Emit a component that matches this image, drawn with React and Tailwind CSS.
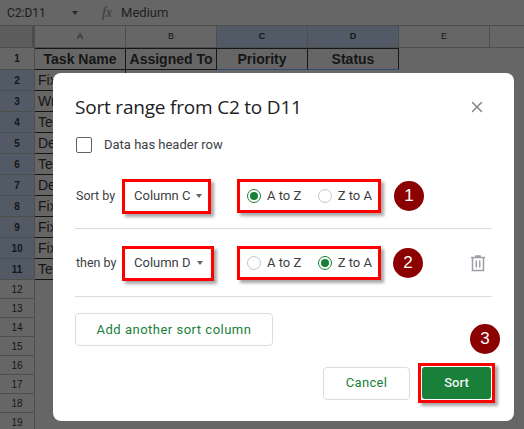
import React from 'react';
import { X } from 'lucide-react';

const columns = [
  { label: 'A', head: 'Task Name', selected: false },
  { label: 'B', head: 'Assigned To', selected: false },
  { label: 'C', head: 'Priority', selected: true },
  { label: 'D', head: 'Status', selected: true },
  { label: 'E', head: '', selected: false },
];

const rows = ['Fix', 'Wr', 'Tes', 'De', 'Tes', 'De', 'Fix', 'Fix', 'Fix', 'Tes'];
const emptyRows = [12, 13, 14, 15, 16, 17, 18, 19];

function Sheet() {
  return (
    <div className="w-[524px] h-[429px] overflow-hidden bg-[#666666] font-['Liberation_Sans',sans-serif] text-[#161616]">
      <div className="h-[26px] flex items-center border-b border-[#4e4e4e] text-[12px] font-['Roboto',sans-serif] text-[#1c1c1c]">
        <span className="ml-[7px] w-[65px]">C2:D11</span>
        <span className="w-0 h-0 border-x-[3.5px] border-x-transparent border-t-[4px] border-t-[#2a2a2a]"></span>
        <span className="ml-[24px] italic font-['Liberation_Serif',serif] text-[14px] text-[#3c3c3c]">fx</span>
        <span className="ml-[9px] text-[13px] text-[#222222]">Medium</span>
      </div>
      <div className="flex h-[22px] border-b border-[#4e4e4e]">
        <div className="w-[35px] bg-[#5d5d5d] border-r-[3px] border-[#4c4c4c]"></div>
        {columns.map((c) => (
          <div
            key={c.label}
            className={`w-[91px] shrink-0 flex items-center justify-center text-[9px] border-r border-[#4e4e4e] ${c.selected ? 'bg-[#525a66] font-bold' : ''}`}
          >
            {c.label}
          </div>
        ))}
      </div>
      <div className="flex h-[22px]">
        <div className="w-[35px] flex items-center justify-center text-[10px] font-bold border-r border-[#4e4e4e] border-b">1</div>
        {columns.slice(0, 4).map((c) => (
          <div
            key={c.label}
            className={`w-[91px] shrink-0 flex items-center justify-center text-[14px] font-bold whitespace-nowrap border-r border-t border-b border-t-[#161616] border-r-[#161616] ${c.selected ? 'border-b-[#2f4a73]' : 'border-b-[#161616]'}`}
          >
            {c.head}
          </div>
        ))}
      </div>
      {rows.map((name, i) => (
        <div key={i} className="flex h-[21px]">
          <div className="w-[35px] bg-[#525a66] flex items-center justify-center text-[10px] font-bold border-r border-b border-[#4e4e4e]">{i + 2}</div>
          <div className="w-[91px] pl-[3px] flex items-center text-[14px] border-r border-b border-[#161616]">{name}</div>
        </div>
      ))}
      {emptyRows.map((n) => (
        <div key={n} className="flex h-[19px]">
          <div className="w-[35px] flex items-center justify-center text-[10px] border-r border-b border-[#4e4e4e]">{n}</div>
        </div>
      ))}
    </div>
  );
}

function Radio({ checked, label }) {
  return (
    <div className="flex items-center gap-[6px]">
      <span className={`w-[14px] h-[14px] rounded-full border flex items-center justify-center ${checked ? 'border-[#188038]' : 'border-[#c4c7c5]'}`}>
        {checked && <span className="w-[8px] h-[8px] rounded-full bg-[#188038]"></span>}
      </span>
      <span>{label}</span>
    </div>
  );
}

function Badge({ n, className }) {
  return (
    <div className={`w-[30px] h-[30px] rounded-full bg-[#8b0000] text-white flex items-center justify-center text-[17px] font-['Liberation_Sans',sans-serif] ${className}`}>
      {n}
    </div>
  );
}

const redBox = 'border-[3px] border-[#ff0000] shadow-[3px_3px_3px_rgba(0,0,0,0.35)]';

function SortRow({ label, column, first, selectW, gap, children }) {
  return (
    <div className="flex items-center h-[36px]">
      <span className="w-[47px] pl-px shrink-0 whitespace-nowrap text-[12.5px]">{label}</span>
      <div className={`${redBox} ${selectW} h-[35px] flex items-center pl-[9px] gap-[6px] shrink-0`}>
        <span>{column}</span>
        <span className="w-0 h-0 border-x-[3.5px] border-x-transparent border-t-[4px] border-t-[#5f6368]"></span>
      </div>
      <div className={`${redBox} ${gap} w-[144px] h-[34px] flex items-center justify-between pl-[7px] pr-[6px] shrink-0`}>
        <Radio checked={first} label="A to Z" />
        <Radio checked={!first} label="Z to A" />
      </div>
      {children}
    </div>
  );
}

export default function App() {
  return (
    <div className="relative w-[524px] h-[429px] overflow-hidden">
      <Sheet />
      <div className="absolute left-[53px] top-[73px] w-[461px] h-[348px] bg-white rounded-[8px] pl-[22px] pr-[22px] text-[13px] text-[#3c4043] font-['Roboto',sans-serif] flex flex-col">
        <div className="flex items-center justify-between mt-[20px] h-[28px]">
          <h2 className="text-[19px] text-[#202124] font-['Open_Sans',sans-serif] tracking-[-0.2px]">Sort range from C2 to D11</h2>
          <X className="w-[18px] h-[18px] text-[#80868b] mr-[6px]" strokeWidth={2} />
        </div>
        <div className="flex items-center mt-[14px] h-[20px]">
          <span className="ml-[1px] w-[16px] h-[16px] rounded-[2px] border border-[#5f6368]"></span>
          <span className="ml-[12px]">Data has header row</span>
        </div>
        <div className="mt-[23px]">
          <SortRow label="Sort by" column="Column C" first={true} selectW="w-[89px]" gap="ml-[26px]">
            <Badge n="1" className="ml-[13px]" />
          </SortRow>
        </div>
        <div className="h-px bg-[#dadce0] mt-[14px]"></div>
        <div className="mt-[16px]">
          <SortRow label="then by" column="Column D" first={false} selectW="w-[92px]" gap="ml-[23px]">
            <Badge n="2" className="ml-[12px]" />
            <svg className="ml-[46px] w-[18px] h-[18px]" viewBox="0 0 18 18" fill="none" stroke="#9aa0a6" strokeWidth="1.5">
              <path d="M2 3.5h14M7 3.5V2h4v1.5M3.5 3.5V16.5h11V3.5M7.3 6.5v7M10.7 6.5v7" />
            </svg>
          </SortRow>
        </div>
        <div className="h-px bg-[#dadce0] mt-[15px]"></div>
        <button className="mt-[16px] w-[198px] h-[33px] rounded-[4px] border border-[#dadce0] text-[#188038] tracking-[0.5px]">
          Add another sort column
        </button>
        <div className="flex justify-end items-center mt-[17px] mr-[-3px]">
          <button className="w-[87px] h-[33px] rounded-[4px] border border-[#dadce0] text-[#188038] tracking-[0.3px]">Cancel</button>
          <div className={`${redBox} ml-[8px] p-[1px] w-[77px] h-[40px]`}>
            <button className="w-full h-full rounded-[3px] bg-[#188038] text-[#f1f3f4] font-medium">Sort</button>
          </div>
        </div>
        <Badge n="3" className="absolute left-[417px] top-[251px]" />
      </div>
    </div>
  );
}
